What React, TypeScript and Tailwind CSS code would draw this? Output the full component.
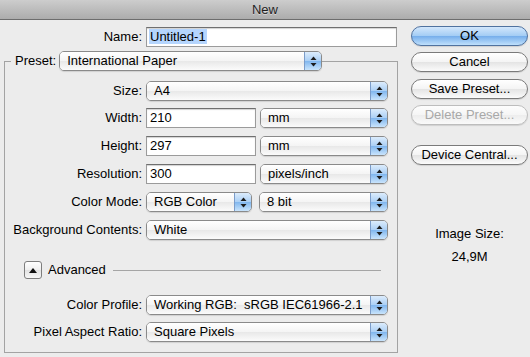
import React from "react";

const font = "font-['Liberation_Sans',Arial,sans-serif]";

function Arrows() {
  return (
    <svg width="7" height="11" viewBox="0 0 7 11" className="block">
      <path d="M3.5 0.5 L6.5 4 L0.5 4 Z" fill="#1c1c1c" />
      <path d="M3.5 10.5 L6.5 7 L0.5 7 Z" fill="#1c1c1c" />
    </svg>
  );
}

function Popup({ value, w, className }: { value: string; w: string; className?: string }) {
  return (
    <div
      className={`flex h-[20px] ${w} overflow-hidden rounded-[5px] border border-[#8a8a8a] shadow-[0_1px_1px_rgba(0,0,0,0.12)] ${className ?? ""}`}
    >
      <div className="flex-1 truncate whitespace-pre bg-[linear-gradient(#ffffff,#f4f4f4_50%,#e8e8e8_51%,#fbfbfb)] pl-[7px] text-[13px] leading-[18px] text-black">
        {value}
      </div>
      <div className="flex w-[17px] items-center justify-center border-l border-[#7b9cc9] bg-[linear-gradient(#dcecfc,#aacff5_50%,#80b6ee_51%,#c9e4fc)]">
        <Arrows />
      </div>
    </div>
  );
}

function Field({ value, w }: { value: string; w: string }) {
  return (
    <div
      className={`h-[20px] ${w} border border-[#9b9b9b] border-t-[#6f6f6f] bg-white pl-[3px] text-[13px] leading-[18px] text-black shadow-[inset_0_1px_1px_rgba(0,0,0,0.18)]`}
    >
      {value}
    </div>
  );
}

function Button({
  label,
  primary,
  disabled,
  className,
}: {
  label: string;
  primary?: boolean;
  disabled?: boolean;
  className?: string;
}) {
  const look = primary
    ? "border-[#50729f] bg-[linear-gradient(#d3e7fc,#a2ccf4_50%,#76aeeb_51%,#bfe0fc)] text-black"
    : disabled
      ? "border-[#bdbdbd] bg-[linear-gradient(#fdfdfd,#f5f5f5_50%,#ededed_51%,#fafafa)] text-[#a8a8a8]"
      : "border-[#7a7a7a] bg-[linear-gradient(#ffffff,#f4f4f4_50%,#e4e4e4_51%,#fbfbfb)] text-black";
  return (
    <div
      className={`h-[20px] w-[117px] rounded-full border text-center text-[13px] leading-[18px] shadow-[0_1px_1px_rgba(0,0,0,0.12)] ${look} ${className ?? ""}`}
    >
      {label}
    </div>
  );
}

function Row({
  label,
  className,
  children,
}: {
  label: string;
  className?: string;
  children: React.ReactNode;
}) {
  return (
    <div className={`flex items-center gap-[4px] ${className ?? ""}`}>
      <div className="w-[137px] text-right text-[13px] leading-[20px] text-black">
        {label}
      </div>
      {children}
    </div>
  );
}

export default function App() {
  return (
    <div className={`flex h-[357px] w-[530px] flex-col bg-[#ececec] ${font}`}>
      {/* title bar */}
      <div className="h-[20px] border-b border-[#6d6d6d] bg-[linear-gradient(#cdcdcd,#acacac)] text-center text-[13px] leading-[19px] text-[#1e1e1e] [text-shadow:0_1px_0_rgba(255,255,255,0.45)]">
        New
      </div>

      <div className="flex flex-1">
        {/* left side */}
        <div className="w-[398px]">
          <div className="mt-[7px] flex items-center gap-[4px]">
            <div className="w-[142px] text-right text-[13px] leading-[20px] text-black">
              Name:
            </div>
            <div className="h-[20px] w-[251px] border border-[#9b9b9b] border-t-[#6f6f6f] bg-white pl-[2px] text-[13px] leading-[18px] text-black shadow-[inset_0_1px_1px_rgba(0,0,0,0.18)]">
              <span className="bg-[#b5d5fd] px-px">Untitled-1</span>
            </div>
          </div>

          <fieldset className="ml-[4px] mt-[4px] h-[302px] w-[394px] border border-[#a3a3a3] px-0 pb-0 pt-0">
            <legend className="ml-[6px] flex items-center gap-[3px] pl-[4px] pr-0">
              <span className="text-[13px] leading-[20px] text-black">Preset:</span>
              <Popup value="International Paper" w="w-[263px]" />
            </legend>

            <Row label="Size:" className="mt-[10px]">
              <Popup value="A4" w="w-[242px]" />
            </Row>
            <Row label="Width:" className="mt-[7px]">
              <Field value="210" w="w-[110px]" />
              <Popup value="mm" w="w-[128px]" />
            </Row>
            <Row label="Height:" className="mt-[8px]">
              <Field value="297" w="w-[110px]" />
              <Popup value="mm" w="w-[128px]" />
            </Row>
            <Row label="Resolution:" className="mt-[8px]">
              <Field value="300" w="w-[110px]" />
              <Popup value="pixels/inch" w="w-[128px]" />
            </Row>
            <Row label="Color Mode:" className="mt-[8px]">
              <Popup value="RGB Color" w="w-[106px]" />
              <Popup value="8 bit" w="w-[129px]" className="ml-[3px]" />
            </Row>
            <Row label="Background Contents:" className="mt-[8px]">
              <Popup value="White" w="w-[242px]" />
            </Row>

            <div className="mt-[20px] flex items-center pl-[19px]">
              <div className="flex h-[18px] w-[18px] items-center justify-center rounded-[3px] border border-[#7d7d7d] bg-[linear-gradient(#ffffff,#efefef_50%,#e2e2e2_51%,#f7f7f7)]">
                <svg width="8" height="5" viewBox="0 0 8 5">
                  <path d="M4 0 L8 5 L0 5 Z" fill="#111" />
                </svg>
              </div>
              <span className="ml-[6px] text-[13px] leading-[20px] text-black">Advanced</span>
              <div className="ml-[7px] h-px w-[268px] bg-[#a5a5a5]" />
            </div>

            <Row label="Color Profile:" className="mt-[15px]">
              <Popup value="Working RGB:  sRGB IEC61966-2.1" w="w-[242px]" />
            </Row>
            <Row label="Pixel Aspect Ratio:" className="mt-[7px]">
              <Popup value="Square Pixels" w="w-[242px]" />
            </Row>
          </fieldset>
        </div>

        {/* right side */}
        <div className="ml-[13px] flex w-[117px] flex-col">
          <Button label="OK" primary className="mt-[6px]" />
          <Button label="Cancel" className="mt-[6px]" />
          <Button label="Save Preset..." className="mt-[7px]" />
          <Button label="Delete Preset..." disabled className="mt-[6px]" />
          <Button label="Device Central..." className="mt-[20px]" />
          <div className="mt-[61px] text-center text-[13px] leading-[16px] text-black">
            Image Size:
          </div>
          <div className="mt-[7px] text-center text-[13px] leading-[16px] text-black">
            24,9M
          </div>
        </div>
      </div>
    </div>
  );
}
